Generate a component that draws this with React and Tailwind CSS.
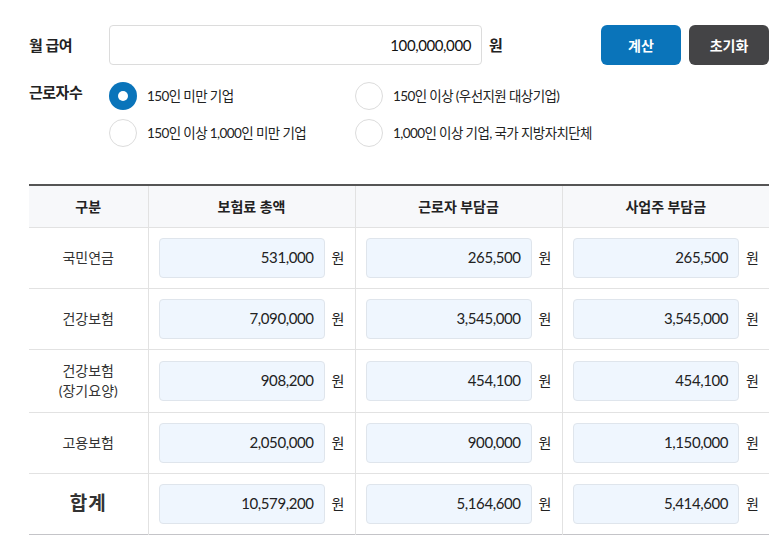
import { useState } from "react";

const FONT = "font-['Lato','Noto_Sans_CJK_KR',sans-serif]";

const rows = [
  { label: "국민연금", values: ["531,000", "265,500", "265,500"] },
  { label: "건강보험", values: ["7,090,000", "3,545,000", "3,545,000"] },
  { label: ["건강보험", "(장기요양)"], values: ["908,200", "454,100", "454,100"], tall: true },
  { label: "고용보험", values: ["2,050,000", "900,000", "1,150,000"] },
  { label: "합계", values: ["10,579,200", "5,164,600", "5,414,600"], total: true },
];

const options = [
  "150인 미만 기업",
  "150인 이상 (우선지원 대상기업)",
  "150인 이상 1,000인 미만 기업",
  "1,000인 이상 기업, 국가 지방자치단체",
];

const Radio = ({ checked, label, onClick }) => (
  <button onClick={onClick} className="flex items-center gap-[10px] text-left">
    {checked ? (
      <span className="w-[28px] h-[28px] rounded-full bg-[#0a74ba] flex items-center justify-center">
        <span className="w-[10px] h-[10px] rounded-full bg-white" />
      </span>
    ) : (
      <span className="w-[28px] h-[28px] rounded-full border border-[#dcdcdc] bg-white" />
    )}
    <span className="text-[13.5px] text-[#222] tracking-[-0.6px]">{label}</span>
  </button>
);

const AmountCell = ({ value }) => (
  <td className="border-l border-[#e2e2e2] px-[10px]">
    <div className="flex items-center gap-[7px]">
      <div className="w-[168px] h-[40px] rounded-[4px] border border-[#dfe5ec] bg-[#eff6fe] flex items-center justify-end pr-[10px] text-[15px] text-[#222] tracking-[-0.4px]">
        {value}
      </div>
      <span className="text-[14px] text-[#222]">원</span>
    </div>
  </td>
);

export default function App() {
  const [selected, setSelected] = useState(0);

  return (
    <div className={`${FONT} bg-white w-[781px] h-[544px] pl-[29px] pt-[25px]`}>
      {/* 월 급여 */}
      <div className="flex items-center w-[740px]">
        <div className="w-[80px] text-[15px] font-bold text-[#222] tracking-[-0.5px]">월 급여</div>
        <div className="w-[373px] h-[40px] border border-[#dcdcdc] rounded-[4px] flex items-center justify-end pr-[10px] text-[15px] text-[#111] tracking-[-0.4px]">
          100,000,000
        </div>
        <span className="ml-[7px] text-[15px] font-bold text-[#222]">원</span>
        <div className="ml-auto flex gap-[8px]">
          <button className="w-[80px] h-[40px] rounded-[6px] bg-[#0a74ba] text-white text-[14px] font-bold">계산</button>
          <button className="w-[80px] h-[40px] rounded-[6px] bg-[#444446] text-white text-[14px] font-bold">초기화</button>
        </div>
      </div>

      {/* 근로자수 */}
      <div className="flex mt-[17px]">
        <div className="w-[80px] leading-[20px] text-[15px] font-bold text-[#222] tracking-[-0.5px]">근로자수</div>
        <div className="grid grid-cols-[246px_1fr] gap-y-[9px]">
          {options.map((o, i) => (
            <Radio key={o} label={o} checked={selected === i} onClick={() => setSelected(i)} />
          ))}
        </div>
      </div>

      {/* 표 */}
      <table className="mt-[37px] w-[740px] border-collapse border-t-2 border-t-[#555] border-b border-b-[#c4c4c8] table-fixed">
        <colgroup>
          <col className="w-[119px]" />
          <col className="w-[207px]" />
          <col className="w-[207px]" />
          <col className="w-[207px]" />
        </colgroup>
        <thead>
          <tr className="h-[42px] bg-[#f7f8fa] text-[14px] font-bold text-[#222]">
            <th>구분</th>
            <th className="border-l border-[#e2e2e2]">보험료 총액</th>
            <th className="border-l border-[#e2e2e2]">근로자 부담금</th>
            <th className="border-l border-[#e2e2e2]">사업주 부담금</th>
          </tr>
        </thead>
        <tbody>
          {rows.map((r, i) => (
            <tr key={i} className={`border-t border-[#e2e2e2] ${r.tall ? "h-[63px]" : "h-[61px]"}`}>
              <td className={`text-center text-[#333] ${r.total ? "text-[19px] font-bold tracking-[1px]" : "text-[14px] leading-[20px]"}`}>
                {Array.isArray(r.label) ? r.label.map((l) => <div key={l}>{l}</div>) : r.label}
              </td>
              {r.values.map((v, j) => (
                <AmountCell key={j} value={v} />
              ))}
            </tr>
          ))}
        </tbody>
      </table>
    </div>
  );
}
